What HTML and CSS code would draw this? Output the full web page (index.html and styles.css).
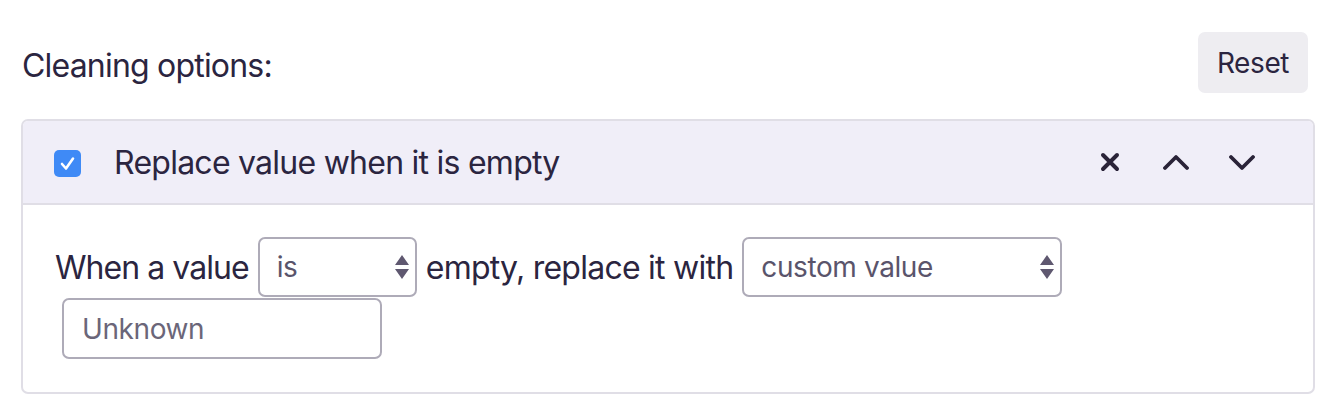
FILE: index.html
```html
<!DOCTYPE html>
<html>
<head>
<meta charset="utf-8">
<link rel="stylesheet" href="styles.css">
</head>
<body>
<div class="page">
  <div class="top">
    <h2 class="title">Cleaning options:</h2>
    <button class="reset">Reset</button>
  </div>
  <div class="card">
    <div class="card-head">
      <span class="check">
        <svg width="27" height="27" viewBox="0 0 27 27"><path d="M8 14 L12 18.5 L19 8.5" fill="none" stroke="#fff" stroke-width="2.6" stroke-linecap="round" stroke-linejoin="round"/></svg>
      </span>
      <span class="head-label">Replace value when it is empty</span>
      <div class="actions">
        <svg class="ico" width="26" height="26" viewBox="0 0 26 26"><path d="M6 6 L20 20 M20 6 L6 20" stroke="#2a2338" stroke-width="4" stroke-linecap="round"/></svg>
        <svg class="ico" width="26" height="26" viewBox="0 0 26 26"><path d="M2 19 L13 8 L24 19" fill="none" stroke="#2a2338" stroke-width="3.8" stroke-linecap="round" stroke-linejoin="round"/></svg>
        <svg class="ico" width="26" height="26" viewBox="0 0 26 26"><path d="M2 8 L13 19 L24 8" fill="none" stroke="#2a2338" stroke-width="3.8" stroke-linecap="round" stroke-linejoin="round"/></svg>
      </div>
    </div>
    <div class="card-body">
      <span class="txt">When a value</span>
      <span class="sel sel-is">
        <select><option>is</option><option>is not</option></select>
        <svg class="arrows" width="14" height="26" viewBox="0 0 14 26"><path d="M7 1 L14 11 L0 11 Z M0 15 L14 15 L7 25 Z" fill="#5f5870"/></svg>
      </span>
      <span class="txt txt-wide">empty, replace it with</span>
      <span class="sel sel-custom">
        <select><option>custom value</option></select>
        <svg class="arrows" width="14" height="26" viewBox="0 0 14 26"><path d="M7 1 L14 11 L0 11 Z M0 15 L14 15 L7 25 Z" fill="#5f5870"/></svg>
      </span>
      <input class="field" type="text" placeholder="Unknown">
    </div>
  </div>
</div>
</body>
</html>
```
FILE: styles.css
```css
html, body {
  margin: 0;
  padding: 0;
  background: #ffffff;
}
body {
  font-family: Inter, "Noto Sans", sans-serif;
  color: #2b2540;
}
.page {
  width: 1294px;
  padding: 32px 0 0 21px;
}
.top {
  display: flex;
  justify-content: space-between;
  align-items: center;
  height: 61px;
}
.title {
  margin: 6px 0 0 1px;
  font-size: 32px;
  font-weight: 400;
  letter-spacing: -0.8px;
}
.reset {
  margin-right: 7px;
  width: 110px;
  height: 61px;
  border: none;
  border-radius: 7px;
  background: #eeedf1;
  color: #2b2540;
  font-family: inherit;
  font-size: 28px;
  letter-spacing: -0.4px;
}
.card {
  margin-top: 26px;
  border: 2px solid #e0dee6;
  border-radius: 7px;
  overflow: hidden;
}
.card-head {
  display: flex;
  align-items: center;
  height: 82px;
  padding: 0 58px 0 31px;
  background: #f0eef8;
  border-bottom: 2px solid #e0dee6;
}
.check {
  display: flex;
  width: 27px;
  height: 27px;
  margin-top: 3px;
  border-radius: 5px;
  background: #3f8af6;
}
.head-label {
  margin-left: 33px;
  font-size: 32px;
  letter-spacing: -0.75px;
  flex: 1;
}
.actions {
  display: flex;
  gap: 40px;
  align-items: center;
}
.ico {
  display: block;
}
.card-body {
  display: flex;
  flex-wrap: wrap;
  align-items: center;
  column-gap: 9px;
  row-gap: 1px;
  padding: 32px 33px 33px 32px;
}
.txt {
  font-size: 32px;
  letter-spacing: -0.95px;
}
.txt-wide {
  letter-spacing: -0.75px;
}
.sel {
  position: relative;
  display: block;
}
.sel select {
  display: block;
  appearance: none;
  -webkit-appearance: none;
  height: 60px;
  border: 2px solid #aeabb8;
  border-radius: 7px;
  background: #ffffff;
  padding: 0 40px 0 17px;
  font-family: inherit;
  font-size: 28px;
  color: #5a546b;
  letter-spacing: -0.4px;
}
.sel-is select {
  width: 159px;
}
.sel-custom select {
  width: 320px;
}
.arrows {
  position: absolute;
  right: 8px;
  top: 17px;
  pointer-events: none;
}
.field {
  display: block;
  box-sizing: border-box;
  margin-left: 7px;
  width: 320px;
  height: 61px;
  border: 2px solid #aeabb8;
  border-radius: 7px;
  padding: 0 18px;
  font-family: inherit;
  font-size: 28px;
  letter-spacing: -0.4px;
  color: #5a546b;
}
.field::placeholder {
  color: #6b6679;
  opacity: 1;
}
```
